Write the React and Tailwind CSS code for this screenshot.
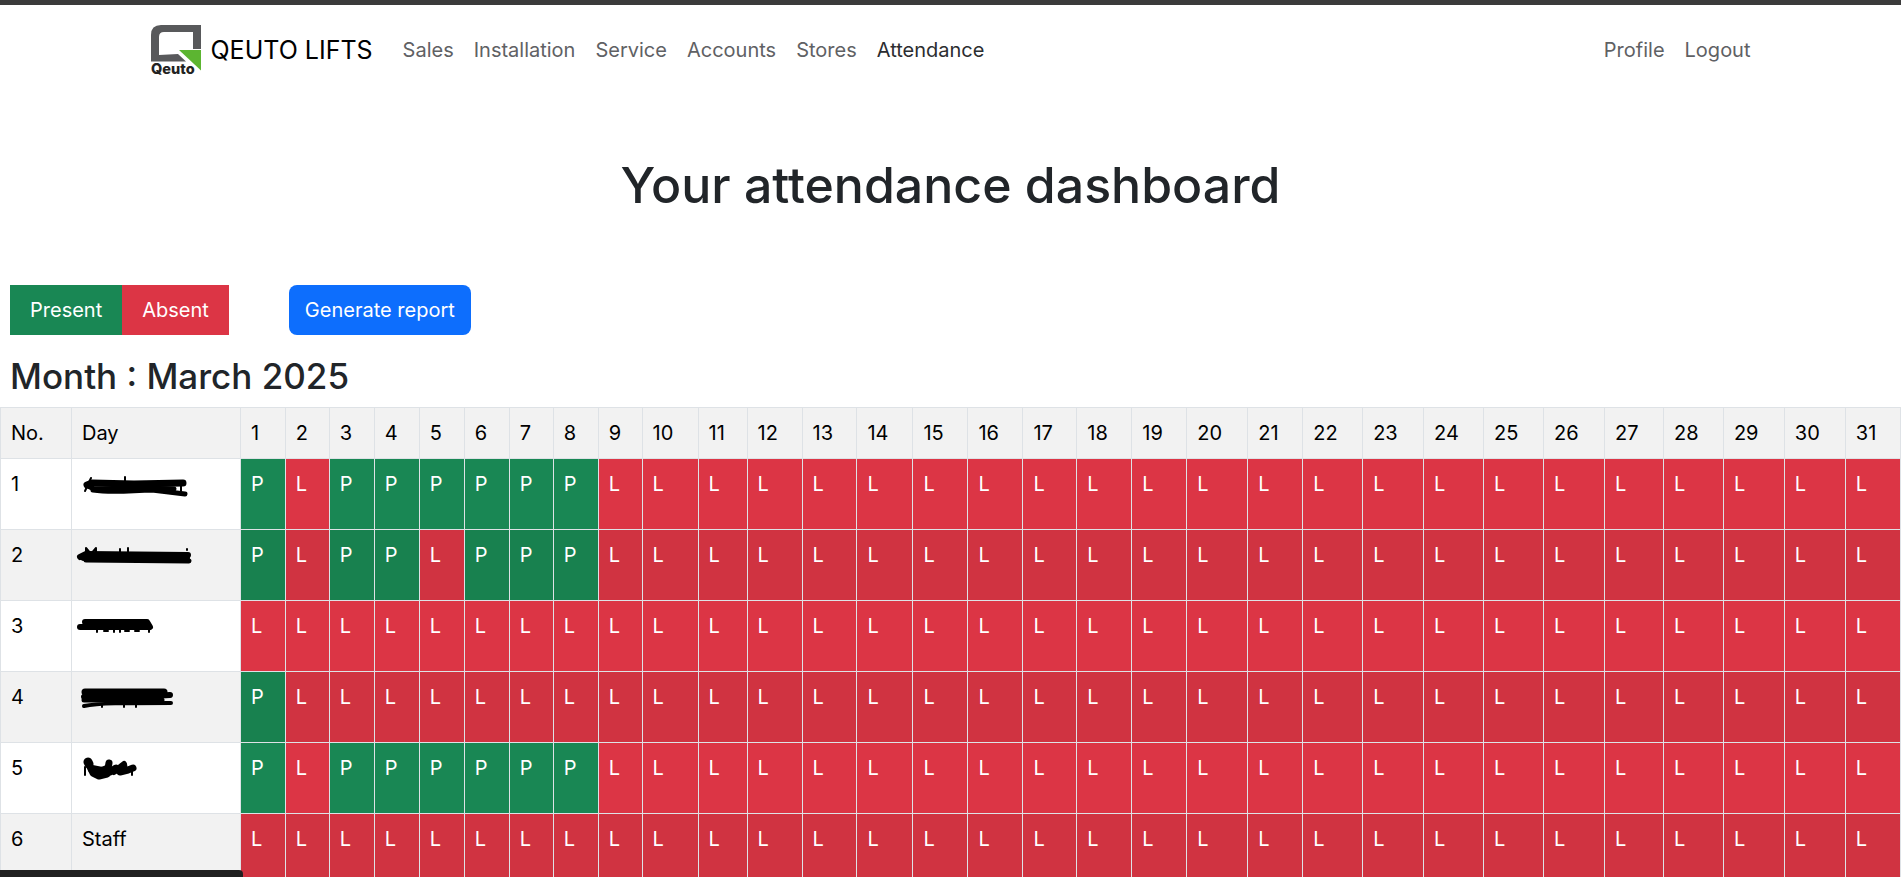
const COLS = [71, 169, 45, 44, 45, 45, 45, 45, 44, 45, 44, 56, 49, 55, 55, 56, 55, 55, 54, 55, 55, 61, 55, 60, 61, 60, 60, 61, 59, 60, 61, 61, 55];
const DAYS = Array.from({ length: 31 }, (_, i) => i + 1);

// Each scribble is a list of [path, stroke width] pairs.
const SCRIBBLES = {
  a: [
    ["M13 16 L18 14 L60 15 L109 14", 7],
    ["M19 21 C40 24 60 21 78 21 L111 25", 5],
    ["M14 17 L20 20 L70 19 L100 20", 5],
    ["M11 22 L17 9 M51 14 V8 M107 22 V16", 2],
  ],
  b: [
    ["M6 17 L12 14 L114 15", 6],
    ["M12 20 L115 21", 5],
    ["M10 17 L112 18", 8],
    ["M12 14 V8 L17 14 L22 8 V14 M46 9 V12 M54 8 V12 M113 9 V10", 2],
  ],
  c: [
    ["M6 16 L75 16", 6],
    ["M11 11 L73 11 L76 16", 6],
    ["M14 14 L72 14", 6],
    ["M23 14 V21 M30 20 H34 M40 14 V21 M46 14 V21 M51 20 H55 M61 20 H65 M75 14 V21", 2],
  ],
  d: [
    ["M11 10 L90 10", 7],
    ["M10 15 L28 13 L60 15 L96 13", 6],
    ["M10 18 L50 18 L88 18", 5],
    ["M10 24 C24 21 50 21 97 21", 4],
    ["M28 23 V25 M50 20 V25 M62 20 V25", 2],
  ],
  e: [
    ["M14 9 L15 11", 9],
    ["M15 12 L19 20 L25 23 L33 21 L35 10", 7],
    ["M18 16 L28 18 L33 16", 8],
    ["M40 19 L50 11 L51 18 L43 16", 6],
    ["M36 19 L42 15 L46 19 L54 17 L59 15", 7],
    ["M11 14 V22 M58 15 V22", 2],
  ],
};

const ROWS = [
  { scribble: "a", marks: "PLPPPPPP" },
  { scribble: "b", marks: "PLPPLPPP" },
  { scribble: "c", marks: "LLLLLLLL" },
  { scribble: "d", marks: "PLLLLLLL" },
  { scribble: "e", marks: "PLPPPPPP" },
  { name: "Staff", marks: "LLLLLLLL" },
];

const LINKS = ["Sales", "Installation", "Service", "Accounts", "Stores", "Attendance"];

function Logo() {
  return (
    <svg viewBox="0 0 50 54" className="-mb-1 h-[54px] w-[50px]" role="img" aria-label="Qeuto">
      <path fill="#58595b" fillRule="evenodd" d="M10 0H50V24H42V7H13Q8 7 8 12V30L27 29L35 36.500H0V10Q0 0 10 0Z" />
      <path fill="#5cb531" d="M28 25H50V45.500Z" />
      <text x="0" y="49" fontFamily="Inter, sans-serif" fontWeight="800" fontSize="14.500" fill="#222">Qeuto</text>
    </svg>
  );
}

function Scribble({ kind }) {
  return (
    <svg viewBox="0 0 120 30" width="120" height="30" className="-ml-2 block" role="img" aria-label="Name hidden">
      {SCRIBBLES[kind].map(([d, width]) => (
        <path key={d} d={d} fill="none" stroke="#000" strokeWidth={width} strokeLinecap="round" strokeLinejoin="round" />
      ))}
    </svg>
  );
}

function Mark({ value, striped }) {
  const tone = value === "P" ? (striped ? "bg-[#18814f]" : "bg-[#198754]") : striped ? "bg-[#d03341]" : "bg-[#dc3545]";
  return <td className={`border border-[#dee2e6] px-2.5 pt-2.5 pb-[30px] align-top text-white ${tone}`}>{value}</td>;
}

export default function App() {
  return (
    <div className="min-h-screen border-t-[5px] border-[#3b3b3b] bg-white font-['Inter',sans-serif] text-[20px] leading-[30px] text-[#212529]">
      <nav className="mx-auto flex w-full max-w-[1650px] items-center py-2.5 pr-[15px] pl-[25px]">
        <a href="#" className="mr-5 flex items-center gap-2.5 py-2.5 text-[25px] text-black">
          <Logo />
          QEUTO LIFTS
        </a>
        <ul className="flex grow">
          {LINKS.map((label) => (
            <li key={label}>
              <a href="#" className={`block p-2.5 ${label === "Attendance" ? "text-[#2b2d30]" : "text-[#5f6164]"}`}>{label}</a>
            </li>
          ))}
        </ul>
        <ul className="flex text-[#5f6164]">
          <li><a href="#" className="block p-2.5">Profile</a></li>
          <li><a href="#" className="block p-2.5">Logout</a></li>
        </ul>
      </nav>

      <main>
        <h1 className="mt-[60px] text-center text-[50px] leading-[60px] font-medium">Your attendance dashboard</h1>
        <div className="mt-[70px] flex gap-[60px] px-2.5 text-white">
          <div className="flex">
            <span className="bg-[#198754] px-5 py-2.5">Present</span>
            <span className="bg-[#dc3545] px-5 py-2.5">Absent</span>
          </div>
          <button type="button" className="rounded-lg bg-[#0d6efd] px-4 py-2.5">Generate report</button>
        </div>
        <h3 className="mt-5 mb-2.5 px-2.5 text-[35px] leading-[42px] font-medium">Month : March 2025</h3>

        <table className="w-full table-fixed border-collapse text-black">
          <colgroup>
            {COLS.map((w, i) => (
              <col key={i} style={{ width: `${(w / 1901) * 100}%` }} />
            ))}
          </colgroup>
          <thead>
            <tr className="bg-[#f2f2f2] text-left">
              {["No.", "Day", ...DAYS].map((label) => (
                <th key={label} scope="col" className="border border-[#dee2e6] p-2.5 font-normal">{label}</th>
              ))}
            </tr>
          </thead>
          <tbody>
            {ROWS.map((row, r) => {
              const striped = r % 2 === 1;
              return (
                <tr key={r} className={striped ? "bg-[#f2f2f2]" : "bg-white"}>
                  <td className="border border-[#dee2e6] p-2.5 align-top">{r + 1}</td>
                  <td className="border border-[#dee2e6] p-2.5 align-top">{row.name ?? <Scribble kind={row.scribble} />}</td>
                  {DAYS.map((day) => (
                    <Mark key={day} value={row.marks[day - 1] ?? "L"} striped={striped} />
                  ))}
                </tr>
              );
            })}
          </tbody>
        </table>
      </main>
      <div className="fixed bottom-0 left-0 h-[7px] w-[243px] rounded-tr bg-[#202020]" />
    </div>
  );
}
